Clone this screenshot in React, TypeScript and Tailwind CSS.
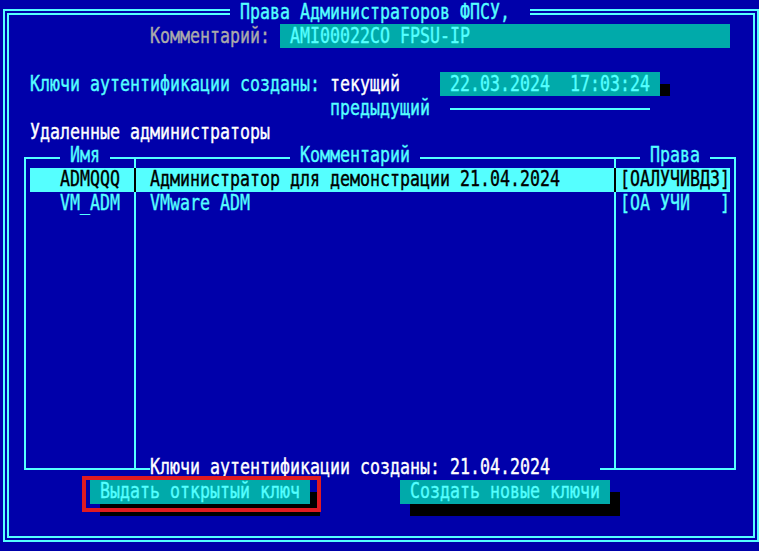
import React from "react";

// text-mode cell: 10px wide, 24px high; glyphs stretched to the tall DOS look
const T = ({ children, className = "" }: { children: React.ReactNode; className?: string }) => (
  <span className={`inline-block whitespace-pre scale-y-[1.3] ${className}`}>{children}</span>
);

const App = () => {
  return (
    <div className="relative w-[759px] h-[551px] overflow-hidden bg-[#0000aa] font-['DejaVu_Sans_Mono',monospace] text-[16.61px] leading-6 text-[#55ffff] [-webkit-text-stroke:0.3px]">
      {/* title row */}
      <div className="flex h-6">
        <div className="ml-[3px] mt-[9px] h-[15px] w-[227px] border-t-[6px] border-l-[6px] border-double border-[#55ffff]" />
        <div className="w-[300px]">
          <T>{" Права Администраторов ФПСУ,"}</T>
        </div>
        <div className="mt-[9px] h-[15px] w-[229px] border-t-[6px] border-r-[6px] border-double border-[#55ffff]" />
      </div>

      <div className="ml-[3px] flex h-[518px] w-[756px] flex-col border-x-[6px] border-b-[6px] border-double border-[#55ffff] pl-px">
        {/* row 1 */}
        <div className="flex h-6">
          <T className="ml-[140px] text-[#aaaaaa]">Комментарий:</T>
          <div className="ml-[10px] w-[450px] bg-[#00aaaa] pl-[10px]">
            <T>AMI00022CO FPSU-IP</T>
          </div>
        </div>
        <div className="h-6" />
        {/* row 3 */}
        <div className="flex h-6">
          <T className="ml-[20px]">Ключи аутентификации созданы:</T>
          <T className="ml-[10px] text-white">текущий</T>
          <div className="ml-[40px] w-[220px] bg-[#00aaaa] pl-[10px]">
            <T>22.03.2024  17:03:24</T>
          </div>
          <div className="mt-[12px] h-[12px] w-[10px] bg-black" />
        </div>
        {/* row 4 */}
        <div className="flex h-6">
          <T className="ml-[320px]">предыдущий</T>
          <div className="ml-[20px] mt-[12px] h-[2px] w-[200px] bg-[#55ffff]" />
        </div>
        {/* row 5 */}
        <div className="flex h-6">
          <T className="ml-[20px] text-white">Удаленные администраторы</T>
        </div>

        {/* admins table */}
        <div className="h-[336px]">
          <div className="ml-[14px] mt-[13px] flex h-[313px] w-[712px] border-2 border-[#55ffff]">
            <div className="flex w-[108px] flex-col">
              <div className="-mt-[15px] ml-[34px] h-6 w-[50px] bg-[#0000aa] text-center">
                <T>Имя</T>
              </div>
              <div className="ml-[4px] h-6 bg-[#55ffff] pr-[14px] text-right text-black">
                <T>ADMQQQ</T>
              </div>
              <div className="h-6 pr-[14px] text-right">
                <T>VM_ADM</T>
              </div>
            </div>
            <div className="flex w-[480px] flex-col border-l-2 border-[#55ffff]">
              <div className="-mt-[15px] ml-[154px] h-6 w-[130px] bg-[#0000aa] text-center">
                <T>Комментарий</T>
              </div>
              <div className="-ml-[2px] h-6 border-l-2 border-black bg-[#55ffff] pl-[14px] text-black">
                <T>Администратор для демонстрации 21.04.2024</T>
              </div>
              <div className="h-6 pl-[14px]">
                <T>VMware ADM</T>
              </div>
              <div className="-mb-[12px] ml-[14px] mt-auto h-6 w-[450px] bg-[#0000aa] text-white">
                <T>Ключи аутентификации созданы: 21.04.2024</T>
              </div>
            </div>
            <div className="flex flex-1 flex-col border-l-2 border-[#55ffff]">
              <div className="-mt-[15px] ml-[24px] h-6 w-[70px] bg-[#0000aa] text-center">
                <T>Права</T>
              </div>
              <div className="-ml-[2px] mr-[4px] h-6 border-l-2 border-black bg-[#55ffff] pl-[4px] text-black">
                <T>[ОАЛУЧИВДЗ]</T>
              </div>
              <div className="h-6 pl-[4px]">
                <T>{"[ОА УЧИ   ]"}</T>
              </div>
            </div>
          </div>
        </div>

        {/* buttons */}
        <div className="flex h-6">
          <div className="ml-[80px] w-[220px] bg-[#00aaaa] pl-[10px] shadow-[10px_12px_0_0_#000]">
            <T>Выдать открытый ключ</T>
          </div>
          <div className="ml-[90px] w-[210px] bg-[#00aaaa] pl-[10px] shadow-[10px_12px_0_0_#000]">
            <T>Создать новые ключи</T>
          </div>
        </div>
      </div>

      {/* red highlight around the button */}
      <div className="absolute left-[82px] top-[476px] h-[36px] w-[239px] border-4 border-[#e01b22]" />
    </div>
  );
};

export default App;
